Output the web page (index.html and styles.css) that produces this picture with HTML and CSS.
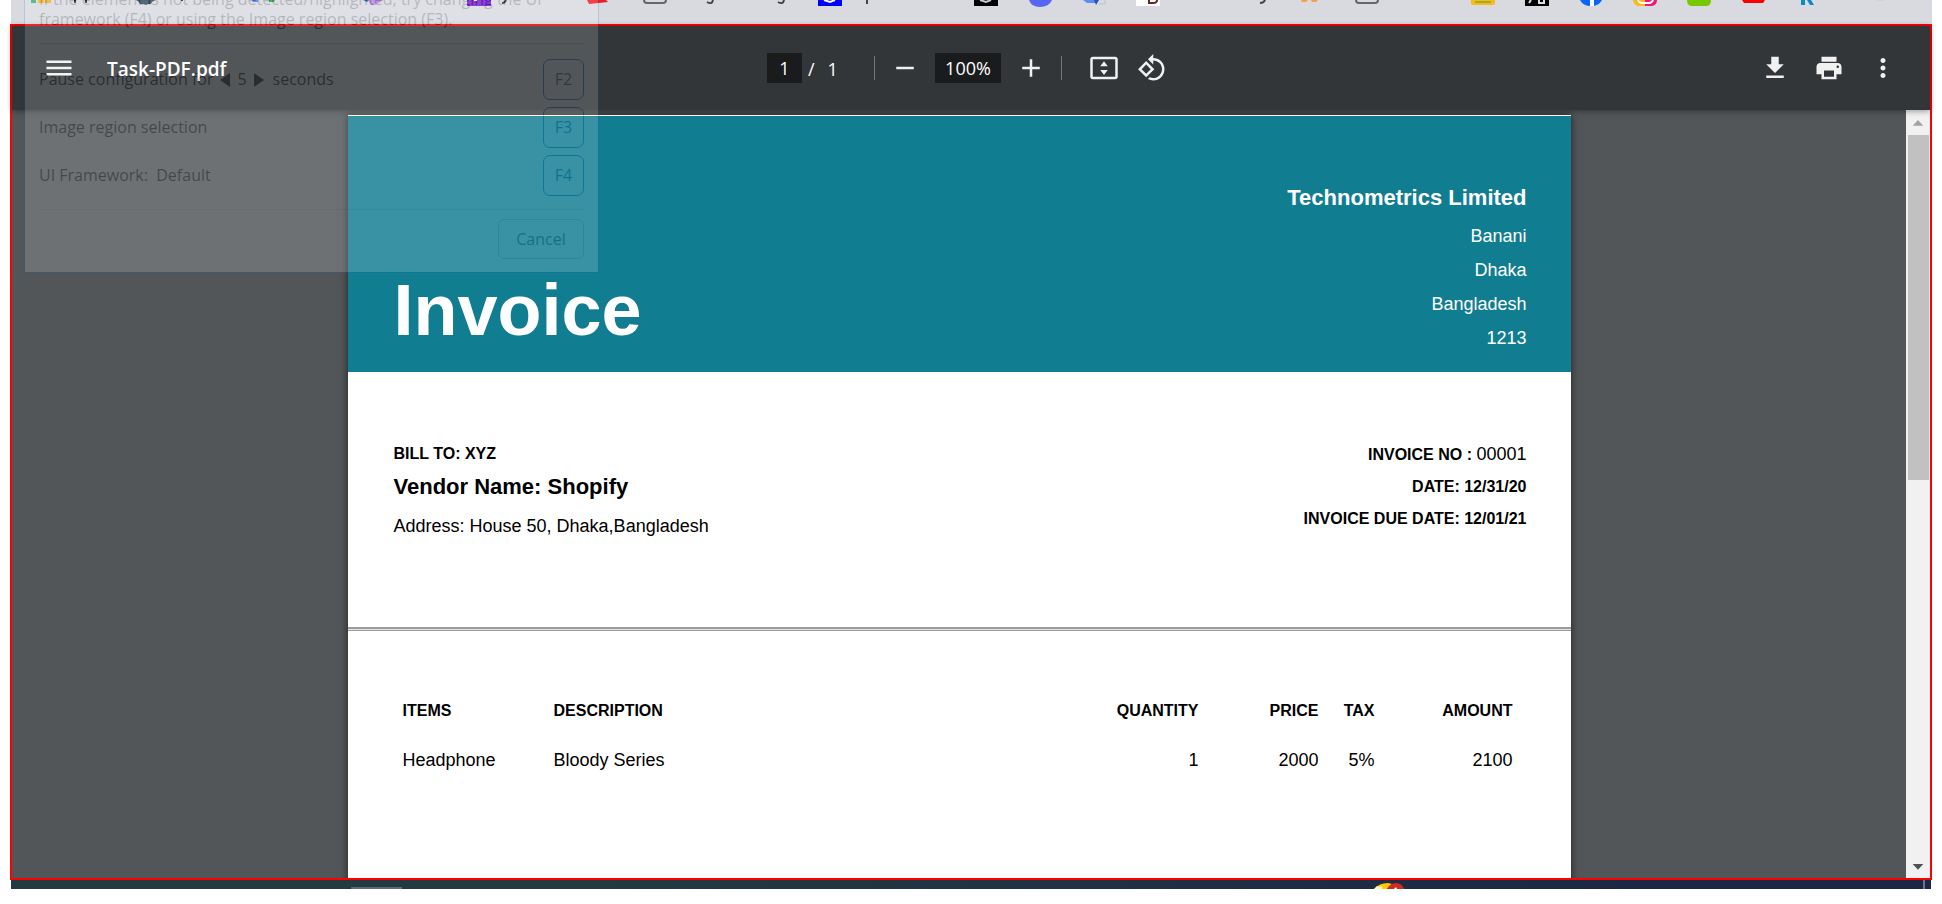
FILE: index.html
```html
<!DOCTYPE html>
<html lang="en">
<head>
<meta charset="utf-8">
<title>Task-PDF.pdf</title>
<link rel="stylesheet" href="styles.css">
</head>
<body>
<div class="screen">
  <div class="bookmarks" aria-hidden="true">
    <svg class="bookmark-icons" width="1920" height="24" viewBox="11 0 1920 24" fill="none">
      <path fill="#3db070" d="M31 0h5v3h-5z"/><path fill="#f4b128" d="M38 0h6v3h-6zM45 0h6v3h-6z"/>
      <path stroke="#333" stroke-width="2" d="M75 0v3M86 0v3M182 0v1"/>
      <path fill="#34495a" d="M136 0h19l-3 2-1 2h-3l-2 1-3-1h-3l-1-2z"/>
      <path fill="#4285f4" d="M252 0h6v2h-5z"/><path fill="#34a853" d="M269 0h6l-1 2h-5z"/>
      <path fill="#b58be0" d="M368 0h15l-8 5h-4z"/><path fill="#1d5fb0" d="M363 0h6l-2 2z"/>
      <path fill="#7220d0" d="M467 0h24v6h-24z"/><path fill="#fff" d="M474 0h3v1h-3z"/>
      <path stroke="#333" stroke-width="2" d="M506 0q-1 3-4 3"/>
      <path fill="#ed1c24" d="M587 0h19l2 2-19 2z"/>
      <path stroke="#63666b" stroke-width="2" d="M644 0q0 3 3 3h16q3 0 3-3M1356 0q0 3 3 3h16q3 0 3-3"/>
      <path stroke="#444" stroke-width="2" d="M707 2q5 3 6-2M778 2q5 3 6-2M1260 3q4 0 5-3"/>
      <path fill="#00f" d="M818 0h24v6h-24z"/><path stroke="#fff" stroke-width="2" d="M824 0l6 2 5-2"/>
      <path stroke="#444" stroke-width="2" d="M867 0v4"/>
      <path fill="#000" d="M974 0h24v6h-24z"/><path stroke="#ccc" stroke-width="2" d="M980 0l6 2 5-2"/>
      <path fill="#5865f2" d="M1029 0h23q-3 7-12 7t-11-7z"/>
      <path fill="#5b8fee" d="M1083 0h12v3h-8z"/><path fill="#2455b8" d="M1094 0h5l-3 5z"/><path stroke="#bcc0c8" d="M1099 4h6V0"/>
      <path fill="#fff" d="M1136 0h24v6h-24z"/><path stroke="#6b2424" stroke-width="2" d="M1149 0v3h4q4 0 4-3"/>
      <path fill="#f6a04d" d="M1301 0h7l-2 2h-4zM1311 0h7l-2 2h-4z"/>
      <path fill="#f8bb17" d="M1471 0h24v4l-2 1h-20l-2-1z"/><path stroke="#9cad32" stroke-width="2" d="M1475 2h16"/>
      <path fill="#000" d="M1525 0h24v6h-24z"/><path stroke="#ddd" stroke-width="2" d="M1531 0l-2 3M1539 0v3h5V0"/>
      <path fill="#0866ff" d="M1580 0h22q-3 6-11 6t-11-6z"/><path fill="#fff" d="M1590 0h4v6h-4z"/>
      <path fill="#fdb913" d="M1633 0h12v6h-7q-4-1-5-6z"/><path fill="#f2167a" d="M1645 0h12q0 5-5 6h-7z"/><path stroke="#fff" stroke-width="2" d="M1638 0q1 3 4 3h7q3 0 4-3"/>
      <path fill="#78c800" d="M1687 0h24q0 6-5 6h-14q-5 0-5-6z"/>
      <path fill="#f00" d="M1742 0h23l-2 3h-19z"/>
      <path fill="#0b8bc6" d="M1801 0h4v5h-4zM1807 0h4l3 5h-4z"/>
      <path stroke="#c8c9d0" d="M1877 0h8"/>
    </svg>
  </div>

  <main class="viewer">
    <header class="toolbar">
      <div class="bar-left">
        <button class="icon-btn" aria-label="Menu"><svg viewBox="0 0 24 24"><path d="M2 18h20v-2H2v2zm0-5h20v-2H2v2zm0-7v2h20V6H2z"/></svg></button>
        <h1 class="file-name">Task-PDF.pdf</h1>
      </div>
      <div class="bar-center">
        <input class="page-input" aria-label="Page number" value="1">
        <span class="page-count"><span>/</span><span>1</span></span>
        <span class="rule"></span>
        <button class="icon-btn zoom-btn" aria-label="Zoom out"><svg viewBox="0 0 24 24"><path d="M5 11h14v2H5z"/></svg></button>
        <input class="zoom-input" aria-label="Zoom level" value="100%">
        <button class="icon-btn zoom-btn" aria-label="Zoom in"><svg viewBox="0 0 24 24"><path d="M19 13h-6v6h-2v-6H5v-2h6V5h2v6h6v2z"/></svg></button>
        <span class="rule"></span>
        <button class="icon-btn fit-btn" aria-label="Fit to page"><svg viewBox="0 0 24 24"><path d="M21 3H3c-1.100 0-2 .9-2 2v14c0 1.100.9 2 2 2h18c1.100 0 2-.9 2-2V5c0-1.100-.9-2-2-2zm0 16H3V5h18v14zM12 6.500 9 10.500h6zM12 17.500l3-4H9z"/></svg></button>
        <button class="icon-btn" aria-label="Rotate counterclockwise"><svg viewBox="0 0 24 24"><path d="M7.340 6.410.86 12.900l6.490 6.480 6.490-6.480-6.500-6.490zM3.690 12.900l3.660-3.660L11 12.900l-3.660 3.660-3.650-3.660zm15.670-6.260C17.610 4.880 15.300 4 13 4V.76L8.760 5 13 9.240V6c1.790 0 3.580.68 4.950 2.050 2.730 2.730 2.730 7.170 0 9.900C16.580 19.320 14.790 20 13 20c-.97 0-1.940-.21-2.840-.61l-1.490 1.490C10.020 21.620 11.510 22 13 22c2.300 0 4.610-.88 6.360-2.640 3.520-3.510 3.520-9.210 0-12.720z"/></svg></button>
      </div>
      <div class="bar-right">
        <button class="icon-btn" aria-label="Download"><svg viewBox="0 0 24 24"><path d="M19 9h-4V3H9v6H5l7 7 7-7zM5 18v2h14v-2H5z"/></svg></button>
        <button class="icon-btn" aria-label="Print"><svg viewBox="0 0 24 24"><path d="M19 8H5c-1.660 0-3 1.340-3 3v6h4v4h12v-4h4v-6c0-1.660-1.340-3-3-3zm-3 11H8v-5h8v5zm3-7c-.55 0-1-.45-1-1s.45-1 1-1 1 .45 1 1-.45 1-1 1zm-1-9H6v4h12V3z"/></svg></button>
        <button class="icon-btn" aria-label="More actions"><svg viewBox="0 0 24 24"><path d="M12 8c1.100 0 2-.9 2-2s-.9-2-2-2-2 .9-2 2 .9 2 2 2zm0 2c-1.100 0-2 .9-2 2s.9 2 2 2 2-.9 2-2-.9-2-2-2zm0 6c-1.100 0-2 .9-2 2s.9 2 2 2 2-.9 2-2-.9-2-2-2z"/></svg></button>
      </div>
    </header>

    <div class="content">
      <div class="canvas">
        <article class="sheet">
          <header class="sheet-head">
            <h2 class="title">Invoice</h2>
            <address class="company">
              <strong class="company-name">Technometrics Limited</strong>
              <span>Banani</span>
              <span>Dhaka</span>
              <span>Bangladesh</span>
              <span>1213</span>
            </address>
          </header>
          <section class="parties">
            <div>
              <p class="label">BILL TO: XYZ</p>
              <p class="vendor">Vendor Name: Shopify</p>
              <p class="street">Address: House 50, Dhaka,Bangladesh</p>
            </div>
            <div class="meta">
              <p class="label">INVOICE NO : <span class="number">00001</span></p>
              <p class="label">DATE: 12/31/20</p>
              <p class="label">INVOICE DUE DATE: 12/01/21</p>
            </div>
          </section>
          <hr class="divider">
          <section class="lines">
            <table class="items">
              <colgroup><col class="c-item"><col><col class="c-qty"><col class="c-price"><col class="c-tax"><col class="c-amount"></colgroup>
              <thead><tr><th>ITEMS</th><th>DESCRIPTION</th><th class="num">QUANTITY</th><th class="num">PRICE</th><th class="num">TAX</th><th class="num">AMOUNT</th></tr></thead>
              <tbody><tr><td>Headphone</td><td>Bloody Series</td><td class="num">1</td><td class="num">2000</td><td class="num">5%</td><td class="num">2100</td></tr></tbody>
            </table>
          </section>
        </article>
      </div>
      <div class="scrollbar" aria-hidden="true">
        <svg class="arrow arrow-up" viewBox="0 0 25 25"><path d="M7 16h11l-5.500-6z"/></svg>
        <div class="track"><div class="thumb"></div></div>
        <svg class="arrow arrow-down" viewBox="0 0 25 25"><path d="M7 11h11l-5.500 6z"/></svg>
      </div>
    </div>
  </main>

  <div class="taskbar" aria-hidden="true">
    <span class="task"></span>
    <svg class="task-icon" width="32" height="6" viewBox="0 0 32 6"><path fill="#ffca08" d="M1 6q5-6 14-6l4 1-5 5z"/><path fill="#fff4c4" d="M1 6l3-3 3 1 2-1v3z"/><path fill="#cf2a1e" d="M14 6q3-6 9-6t8 6z"/><path fill="#fff" d="M21 6l2-2 1 2z"/></svg>
    <span class="desktop-edge"></span>
  </div>

  <aside class="picker">
    <p class="hint">If the element is not being detected/highlighted, try changing the UI<br>framework (F4) or using the Image region selection (F3).</p>
    <div class="options">
      <div class="option"><span class="stepper">Pause configuration for <button class="step" aria-label="Fewer seconds"><svg width="10" height="14" viewBox="0 0 10 14"><path d="M10 0v14L0 7z"/></svg></button>5<button class="step" aria-label="More seconds"><svg width="10" height="14" viewBox="0 0 10 14"><path d="M0 0v14l10-7z"/></svg></button></span><span class="unit">seconds</span><button class="key">F2</button></div>
      <div class="option"><span>Image region selection</span><button class="key">F3</button></div>
      <div class="option"><span>UI Framework:&nbsp; Default</span><button class="key">F4</button></div>
    </div>
    <button class="cancel">Cancel</button>
  </aside>
</div>
</body>
</html>
```
FILE: styles.css
```css
* { box-sizing: border-box; }

body {
  margin: 0;
  background: #fff;
  font-family: "Open Sans", "Noto Sans", sans-serif;
}

h1, h2, p { margin: 0; }

button {
  padding: 0;
  border: 0;
  background: none;
  color: inherit;
  font: inherit;
}

.screen {
  position: relative;
  display: flex;
  flex-direction: column;
  height: 100vh;
  padding: 0 10px 15px;
  overflow: hidden;
}

.bookmarks {
  flex: none;
  height: 24px;
  margin-left: 1px;
  overflow: hidden;
  background: #d9dae0;
}

.bookmark-icons { display: block; }

.viewer {
  flex: 1;
  min-height: 0;
  display: flex;
  flex-direction: column;
  border: 2px solid #f00;
  background: #525659;
}

/* Toolbar */
.toolbar {
  position: relative;
  z-index: 1;
  flex: none;
  display: grid;
  grid-template-columns: 1fr auto 1fr;
  align-items: center;
  height: 84px;
  padding: 0 32px;
  background: #323639;
  box-shadow: 0 1px 6px rgba(0, 0, 0, .4);
  color: #fff;
}

.bar-left, .bar-center, .bar-right {
  display: flex;
  align-items: center;
}

.bar-left { gap: 33px; }
.bar-center { padding-right: 8px; }
.bar-right { justify-content: flex-end; gap: 24px; }

.icon-btn {
  width: 30px;
  height: 30px;
}

.icon-btn svg {
  display: block;
  width: 30px;
  height: 30px;
  fill: #f1f1f1;
}

.file-name {
  padding-top: 2px;
  font-size: 19px;
  font-weight: 600;
  line-height: 30px;
}

.page-input, .zoom-input {
  height: 30px;
  padding: 0;
  border: 0;
  background: #191b1c;
  color: #fff;
  font: 18px/30px "Open Sans", "Noto Sans", sans-serif;
  text-align: center;
}

.page-input { width: 35px; }
.zoom-input { width: 66px; }

.page-count {
  display: flex;
  gap: 13px;
  width: 72px;
  padding: 2px 0 0 6px;
  font-size: 18px;
}

.rule {
  width: 1px;
  height: 24px;
  background: #70757a;
}

.zoom-btn { margin: 0 15px; }
.fit-btn { margin: 0 18px 0 27px; }

/* Document area */
.content {
  flex: 1;
  min-height: 0;
  display: flex;
}

.canvas {
  flex: 1;
  min-width: 0;
  display: flex;
  justify-content: center;
  align-items: flex-start;
  padding-top: 5px;
  overflow: hidden;
}

.sheet {
  flex: 0 1 1223px;
  min-height: 1000px;
  padding-top: 1px;
  background: #fff;
  box-shadow: 0 0 8px rgba(0, 0, 0, .6);
  color: #000;
  font: 18px/32px "Liberation Sans", Arial, sans-serif;
}

.sheet-head {
  display: flex;
  justify-content: space-between;
  align-items: flex-end;
  padding: 62px 44px 17px 46px;
  background: #117d91;
  color: #fff;
}

.title {
  margin-bottom: 9px;
  font-size: 72px;
  line-height: 72px;
}

.company {
  display: flex;
  flex-direction: column;
  font-style: normal;
  line-height: 34px;
  text-align: right;
}

.company-name {
  margin-bottom: 1px;
  font-size: 22px;
  line-height: 40px;
}

.parties {
  display: flex;
  justify-content: space-between;
  padding: 66px 44px 79px 46px;
}

.meta { text-align: right; }

.label {
  font-size: 16px;
  font-weight: 700;
}

.number {
  font-size: 18px;
  font-weight: 400;
}

.vendor {
  font-size: 22px;
  font-weight: 700;
  line-height: 34px;
}

.street { line-height: 44px; }

.divider {
  height: 4px;
  margin: 0;
  border: solid #9c9c9c;
  border-width: 2px 0 1px;
  background: #e4e4e4;
}

.lines { padding: 55px 58px 0 55px; }

.items {
  width: 100%;
  table-layout: fixed;
  border-collapse: collapse;
}

.items th, .items td {
  padding: 0;
  text-align: left;
}

.items th {
  font-size: 16px;
  line-height: 50px;
}

.items td { line-height: 48px; }
.items .num { text-align: right; }

.c-item { width: 151px; }
.c-qty, .c-price { width: 120px; }
.c-tax { width: 56px; }
.c-amount { width: 138px; }

/* Scrollbar */
.scrollbar {
  flex: none;
  display: flex;
  flex-direction: column;
  width: 24px;
  background: #f1f1f1;
}

.arrow {
  width: 24px;
  height: 25px;
}

.arrow-up { fill: #a3a3a3; }
.arrow-down { fill: #505050; }

.track {
  flex: 1;
  padding: 0 1px 0 2px;
}

.thumb {
  height: 48%;
  background: #c1c1c1;
}

/* Taskbar */
.taskbar {
  flex: none;
  display: flex;
  align-items: flex-end;
  height: 9px;
  margin: 0 1px;
  background: linear-gradient(90deg, #233a42 30%, #1b2744 85%);
}

.task {
  width: 51px;
  height: 2px;
  margin-left: 340px;
  background: #596b73;
}

.task-icon { margin-left: 971px; }

.desktop-edge {
  width: 2px;
  height: 9px;
  margin: 0 6px 0 auto;
  background: #6d7488;
}

/* Translucent picker dialog floating over the viewer */
.picker {
  position: absolute;
  z-index: 2;
  top: -12px;
  left: 24px;
  width: 575px;
  padding: 0 14px 13px;
  border: 1px solid #0a58c0;
  background: #fff;
  color: #000;
  font-size: 16px;
  line-height: 21px;
  opacity: .16;
}

.hint {
  padding-bottom: 14px;
  border-bottom: 1px solid #ccc;
  line-height: 20px;
}

.options {
  display: flex;
  flex-direction: column;
  gap: 7px;
  padding: 15px 0 13px;
  border-bottom: 1px solid #ddd;
}

.option {
  display: flex;
  align-items: center;
}

.stepper {
  display: flex;
  align-items: center;
  gap: 7px;
}

.step svg { display: block; }
.unit { margin-left: 9px; }

.key {
  width: 41px;
  height: 41px;
  margin-left: auto;
  border: 1px solid #0a58c0;
  border-radius: 7px;
  color: #0a3f80;
}

.cancel {
  display: block;
  width: 86px;
  height: 40px;
  margin: 9px 0 0 auto;
  border: 1px solid #bbb;
  border-radius: 6px;
  color: #333;
}
```
